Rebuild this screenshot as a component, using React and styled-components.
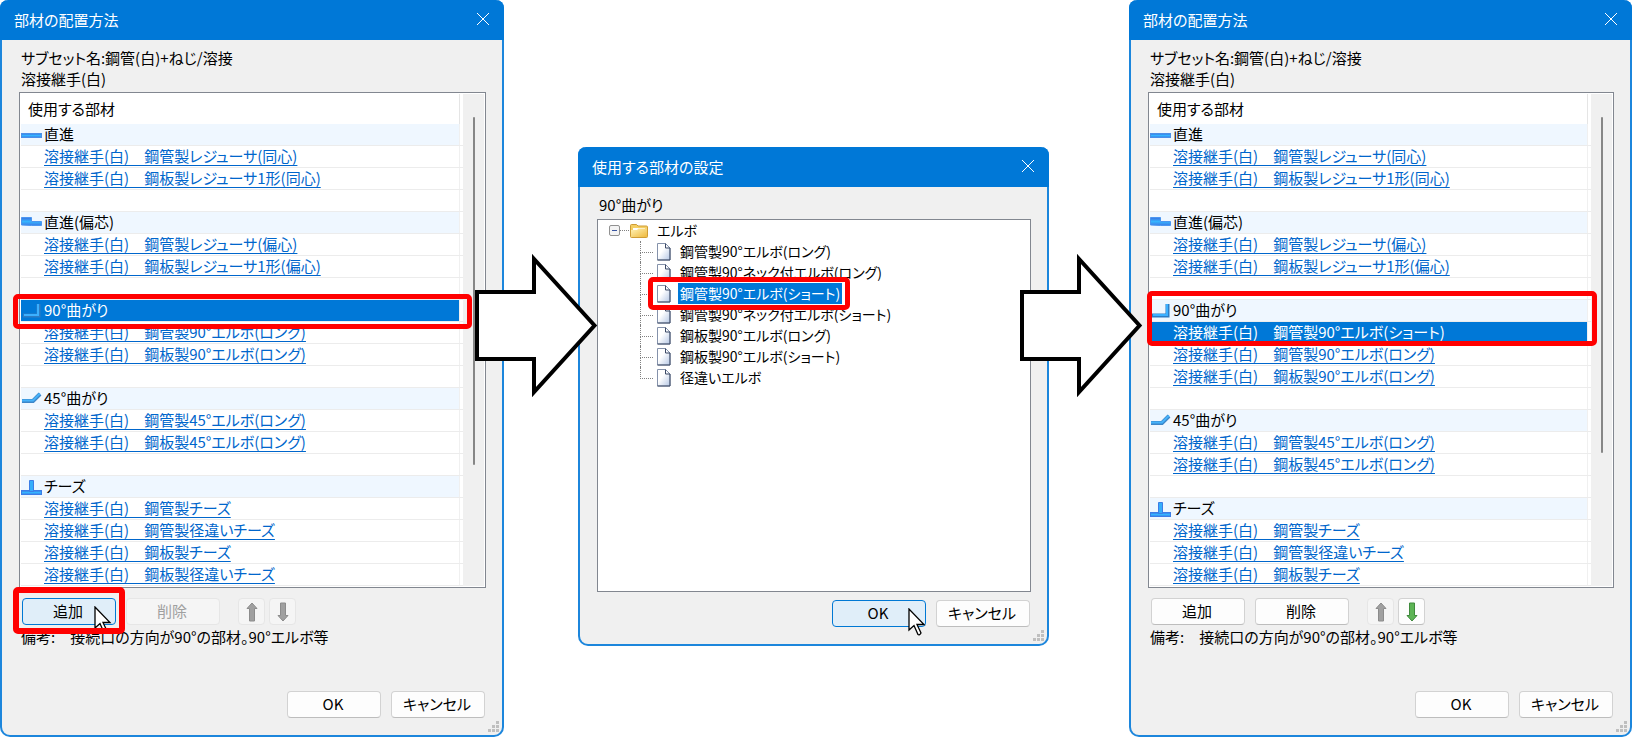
import styled, { createGlobalStyle, css } from 'styled-components'

const GlobalStyle = createGlobalStyle`
  * {
    box-sizing: border-box;
  }

  body {
    margin: 0;
    background: #fff;
    color: #000;
    font-family: "Noto Sans CJK JP", sans-serif;
    font-size: 15px;
    line-height: 21px;
    font-feature-settings: "palt";
  }

  button {
    font: inherit;
    font-feature-settings: inherit;
    color: inherit;
  }
`

const Page = styled.main`
  display: grid;
  grid-template-columns: minmax(0, 504fr) 74px minmax(0, 471fr) 80px minmax(0, 503fr);
  align-items: start;
`

const Dialog = styled.section`
  margin-top: ${(props) => (props.$lowered ? '147px' : '0')};
  border: 2px solid #1c86dc;
  border-top: 0;
  border-radius: 8px 8px 10px 10px;
  background: #f0f0f0;
`

const TitleBar = styled.header`
  display: flex;
  align-items: center;
  justify-content: space-between;
  height: 40px;
  margin: 0 -2px;
  padding: 0 14px 2px;
  border-radius: 8px 8px 0 0;
  background: #0078d7;
  color: #fff;
`

const Title = styled.h2`
  margin: 0;
  font-size: 15px;
  font-weight: 400;
`

const CloseButton = styled.button`
  display: flex;
  padding: 0;
  border: 0;
  background: none;
`

const DialogBody = styled.div`
  padding: 7px 16px 17px 17px;
`

const Caption = styled.p`
  margin: 0;
  padding-left: 2px;
  white-space: nowrap;
`

const ListBox = styled.div`
  display: grid;
  grid-template-columns: minmax(0, 1fr) 21px;
  margin-top: 3px;
  padding: 1px;
  border: 1px solid #828790;
  background: #fff;
`

const ScrollTrack = styled.div`
  padding: 23px 10px 0;
  background: #f0f0f0;
`

const ScrollThumb = styled.div`
  width: 2px;
  height: ${(props) => (props.$short ? '336px' : '348px')};
  border-radius: 1px;
  background: #868686;
`

const PartsTable = styled.table`
  width: 100%;
  border-collapse: separate;
  border-spacing: 0;

  th, td {
    padding: 0;
    font-weight: 400;
    text-align: left;
    white-space: nowrap;
  }

  td {
    border-bottom: 1px solid #ececec;
  }
`

const HeadCell = styled.div`
  height: 30px;
  margin-right: 3px;
  padding: 4px 7px;
  border-right: 1px solid #e5e5e5;
`

const RowCell = styled.div`
  position: relative;
  display: flex;
  align-items: center;
  height: 21px;
  margin-right: 3px;
  padding-bottom: 2px;
  border-right: 1px solid #f0f0f0;
  background: ${(props) => (props.$group ? '#eff7ff' : '#fff')};

  ${(props) => props.$selected && css`
    background: #0078d7;
    color: #fff;
  `}
`

const IconBox = styled.span`
  display: flex;
  flex: none;
  width: 23px;
`

const PartLink = styled.a`
  color: ${(props) => (props.$selected ? '#fff' : '#0066cc')};
  text-decoration: underline;
  text-decoration-thickness: 1px;
  text-underline-offset: 3px;
`

// red frame drawn over the part that the user should look at
const Marker = styled.span`
  position: absolute;
  z-index: 2;
  border: 5px solid #f00;
  border-radius: 5px;
  pointer-events: none;
`

const GroupMarker = styled(Marker)`
  inset: -6px -13px -8px -8px;
`

const TwoRowMarker = styled(Marker)`
  inset: -9px -10px -25px -3px;
`

const ButtonMarker = styled(Marker)`
  inset: -11px -9px -9px -9px;
  border-width: 6px;
`

const TreeMarker = styled(Marker)`
  inset: -6px -8px -6px -30px;
`

const Toolbar = styled.div`
  display: flex;
  gap: 10px;
  margin-top: 10px;
  padding-left: 3px;
`

const MoveButtons = styled.div`
  display: flex;
  gap: 4px;
  margin-left: 8px;
`

const Footer = styled.footer`
  display: flex;
  justify-content: flex-end;
  gap: 10px;
  margin-top: ${(props) => (props.$spaced ? '44px' : '8px')};
  padding-right: 1px;
`

const ButtonSlot = styled.div`
  position: relative;
  display: flex;
`

const Button = styled.button`
  display: flex;
  align-items: center;
  justify-content: center;
  width: ${(props) => (props.$square ? '27px' : '94px')};
  height: 27px;
  padding: ${(props) => (props.$square ? '0' : '0 2px 2px 0')};
  border: 1px solid #d2d2d2;
  border-bottom-color: #bdbdbd;
  border-radius: 4px;
  background: #fdfdfd;

  &:disabled {
    border-color: #e6e6e6;
    background: #f5f5f5;
    color: #a0a0a0;
  }

  ${(props) => props.$hot && css`
    border-color: #0078d4;
    background: #e0eef9;
  `}
`

const Pointer = styled.svg`
  position: absolute;
  left: ${(props) => (props.$tall ? '76px' : '72px')};
  top: 8px;
  z-index: 1;
`

const Note = styled.p`
  margin: 1px 0 0;
  padding-left: 2px;
  white-space: nowrap;
`

const Grip = styled.svg`
  display: block;
  margin: -14px 3px 3px auto;
`

const ArrowCell = styled.div`
  position: relative;
  z-index: 3;
  margin: 252px 0 0 -29px;
`

const ArrowSvg = styled.svg`
  display: block;
  overflow: visible;
`

const TreeBox = styled.ul`
  height: 373px;
  margin: 4px 0 0;
  padding: 0 0 0 11px;
  border: 1px solid #828790;
  background: #fff;
  font-size: 14px;
  list-style: none;
`

const TreeRow = styled.div`
  display: flex;
  align-items: center;
  height: 21px;
  white-space: nowrap;
`

const TreeChildren = styled.ul`
  margin: 0;
  padding: 0 0 0 31px;
  list-style: none;
`

const Expander = styled.button`
  width: 11px;
  height: 11px;
  padding: 4px 2px;
  border: 1px solid #919191;
  border-radius: 2px;
  background: #f4f4f4;

  &::before {
    content: "";
    display: block;
    height: 1px;
    background: #3a55a0;
  }
`

const Dots = styled.span`
  width: 9px;
  margin-right: 1px;
  border-top: 1px dotted #808080;
`

const Branch = styled.span`
  display: flex;
  flex-direction: column;
  width: 13px;
  height: 21px;
  margin-right: 4px;

  &::before {
    content: "";
    height: 11px;
    border-left: 1px dotted #808080;
    border-bottom: 1px dotted #808080;
  }

  &::after {
    content: "";
    flex: 1;
    border-left: ${(props) => (props.$last ? '0' : '1px dotted #808080')};
  }
`

const TreeLabel = styled.span`
  position: relative;
  margin-left: 7px;
  padding: 0 2px;
  background: ${(props) => (props.$selected ? '#0078d7' : 'transparent')};
  color: ${(props) => (props.$selected ? '#fff' : '#000')};
`

const HiddenSvg = styled.svg`
  position: absolute;
`

const Gradients = () => (
  <HiddenSvg width="0" height="0" aria-hidden="true">
    <defs>
      <linearGradient id="pipe" x1="0" y1="0" x2="0" y2="1">
        <stop offset="0" stopColor="#3c6fe0" />
        <stop offset="0.5" stopColor="#35b4ff" />
        <stop offset="1" stopColor="#3c7de6" />
      </linearGradient>
      <linearGradient id="folder" x1="0" y1="0" x2="1" y2="1">
        <stop offset="0" stopColor="#fff3b8" />
        <stop offset="1" stopColor="#efb93c" />
      </linearGradient>
      <linearGradient id="page" x1="0" y1="0" x2="1" y2="1">
        <stop offset="0.4" stopColor="#fff" />
        <stop offset="1" stopColor="#b4c6e4" />
      </linearGradient>
    </defs>
  </HiddenSvg>
)

const pipes = {
  straight: <rect x="0.5" y="9.5" width="20" height="4" fill="url(#pipe)" stroke="#4b8fe8" />,
  eccentric: (
    <path d="M.5 5.500h10v4h10v4h-10l-10-.5z" fill="url(#pipe)" stroke="#4b96f0" />
  ),
  bend90: (
    <>
      <path d="M2 15.500h15.500V4" fill="none" stroke="#2d7cc4" strokeWidth="4" />
      <path d="M3 15h14V4" fill="none" stroke="#3cb0ff" strokeWidth="2" />
    </>
  ),
  bend45: (
    <>
      <path d="M1 13h11l7-7" fill="none" stroke="#3d86c8" strokeWidth="4" />
      <path d="M1 12.500h11l7-7" fill="none" stroke="#45b2fa" strokeWidth="2" />
    </>
  ),
  tee: (
    <>
      <rect x="0.5" y="14.500" width="20" height="4" fill="url(#pipe)" stroke="#3c7de6" />
      <path d="M8.500 4.500h4v11h-4z" fill="#35aefa" stroke="#3c7de6" />
    </>
  ),
}

const PipeIcon = ({ kind }) => (
  <svg width="21" height="21" viewBox="0 -1 21 21" aria-hidden="true">{pipes[kind]}</svg>
)

const FolderIcon = () => (
  <svg width="18" height="15" viewBox="0 0 18 15" aria-hidden="true">
    <path d="M.5 2.500q0-1 1-1h5l1.500 1.500h8.500q1 0 1 1v9.500q0 1-1 1H1.500q-1 0-1-1z" fill="#f5cf62" stroke="#cf9c35" />
    <path d="M3 5h12v3H3z" fill="#fff" />
    <path d="M1 7h6l1.500-1.500H17V14H1z" fill="url(#folder)" />
  </svg>
)

const DocIcon = () => (
  <svg width="14" height="18" viewBox="0 0 14 18" aria-hidden="true">
    <path d="M.5.5h8l4.500 4.500v12H.5z" fill="url(#page)" stroke="#8592ab" />
    <path d="M8.500.5V5H13v12H.5" fill="none" stroke="#3c4a66" />
  </svg>
)

const MoveIcon = ({ down, active }) => (
  <svg width="12" height="20" viewBox="0 0 12 20" aria-hidden="true">
    <path
      d="M6 1l5 5.500H8.500V19h-5V6.500H1z"
      transform={down ? 'rotate(180 6 10)' : undefined}
      fill={active ? '#5db455' : '#a0a0a0'}
      stroke={active ? '#3f8a3c' : '#8c8c8c'}
      strokeLinejoin="round"
    />
  </svg>
)

const CursorIcon = ({ tall }) => (
  <Pointer $tall={tall} width="18" height="29" viewBox="0 0 18 29" aria-hidden="true">
    <path
      d="M1 1v21l5-4.500 4 9q1.500 1 3-1.500l-4-8.500h7z"
      fill="#fff"
      stroke="#000"
      strokeWidth="1.300"
    />
  </Pointer>
)

const ResizeGrip = () => (
  <Grip width="11" height="11" viewBox="0 0 11 11" fill="#bfbfbf" aria-hidden="true">
    <path d="M8 0h3v3H8zM4 4h3v3H4zM8 4h3v3H8zM0 8h3v3H0zM4 8h3v3H4zM8 8h3v3H8z" />
  </Grip>
)

const StepArrow = () => (
  <ArrowCell>
    <ArrowSvg width="123" height="147" viewBox="0 0 123 147" aria-hidden="true">
      <path
        d="M2 40h57V7l60.500 66.500L59 140v-33H2z"
        fill="#fff"
        stroke="#000"
        strokeWidth="4"
        strokeMiterlimit="10"
      />
    </ArrowSvg>
  </ArrowCell>
)

const TitledDialog = ({ title, lowered, children }) => (
  <Dialog $lowered={lowered} aria-label={title}>
    <TitleBar>
      <Title>{title}</Title>
      <CloseButton type="button" aria-label="閉じる">
        <svg width="14" height="14" viewBox="0 0 14 14" fill="none" stroke="#fff" aria-hidden="true">
          <path d="M1 1l12 12M13 1L1 13" />
        </svg>
      </CloseButton>
    </TitleBar>
    <DialogBody>{children}</DialogBody>
    <ResizeGrip />
  </Dialog>
)

const group = (icon, name, extra = {}) => ({ icon, name, ...extra })
const part = (name, extra = {}) => ({ part: `溶接継手(白)\u3000${name}`, ...extra })
const blank = {}

const straightRows = [
  group('straight', '直進'),
  part('鋼管製レジューサ(同心)'),
  part('鋼板製レジューサ1形(同心)'),
  blank,
  group('eccentric', '直進(偏芯)'),
  part('鋼管製レジューサ(偏心)'),
  part('鋼板製レジューサ1形(偏心)'),
  blank,
]

const bendRows = [
  part('鋼管製90°エルボ(ロング)'),
  part('鋼板製90°エルボ(ロング)'),
  blank,
  group('bend45', '45°曲がり'),
  part('鋼管製45°エルボ(ロング)'),
  part('鋼板製45°エルボ(ロング)'),
  blank,
  group('tee', 'チーズ'),
  part('鋼管製チーズ'),
  part('鋼管製径違いチーズ'),
  part('鋼板製チーズ'),
]

const rowsBefore = [
  ...straightRows,
  group('bend90', '90°曲がり', { selected: true, marker: <GroupMarker /> }),
  ...bendRows,
  part('鋼板製径違いチーズ'),
]

const rowsAfter = [
  ...straightRows,
  group('bend90', '90°曲がり', { marker: <TwoRowMarker /> }),
  part('鋼管製90°エルボ(ショート)', { selected: true }),
  ...bendRows,
]

const elbows = [
  '鋼管製90°エルボ(ロング)',
  '鋼管製90°ネック付エルボ(ロング)',
  '鋼管製90°エルボ(ショート)',
  '鋼管製90°ネック付エルボ(ショート)',
  '鋼板製90°エルボ(ロング)',
  '鋼板製90°エルボ(ショート)',
  '径違いエルボ',
]
const selectedElbow = 2

const PlacementDialog = ({ rows, added }) => (
  <TitledDialog title="部材の配置方法">
    <Caption>サブセット名:鋼管(白)+ねじ/溶接</Caption>
    <Caption>溶接継手(白)</Caption>
    <ListBox>
      <PartsTable>
        <thead>
          <tr><th scope="col"><HeadCell>使用する部材</HeadCell></th></tr>
        </thead>
        <tbody>
          {rows.map((row, i) => (
            <tr key={i}>
              <td>
                <RowCell $group={!!row.icon} $selected={row.selected}>
                  <IconBox>{row.icon && <PipeIcon kind={row.icon} />}</IconBox>
                  {row.name}
                  {row.part && <PartLink href="#" $selected={row.selected}>{row.part}</PartLink>}
                  {row.marker}
                </RowCell>
              </td>
            </tr>
          ))}
        </tbody>
      </PartsTable>
      <ScrollTrack>
        <ScrollThumb $short={added} />
      </ScrollTrack>
    </ListBox>
    <Toolbar>
      <ButtonSlot>
        <Button type="button" $hot={!added}>追加</Button>
        {!added && (
          <>
            <CursorIcon />
            <ButtonMarker />
          </>
        )}
      </ButtonSlot>
      <Button type="button" disabled={!added}>削除</Button>
      <MoveButtons>
        <Button type="button" $square disabled aria-label="上へ"><MoveIcon /></Button>
        <Button type="button" $square disabled={!added} aria-label="下へ">
          <MoveIcon down active={added} />
        </Button>
      </MoveButtons>
    </Toolbar>
    <Note>備考:{'\u3000'}接続口の方向が90°の部材。90°エルボ等</Note>
    <Footer $spaced>
      <Button type="button">OK</Button>
      <Button type="button">キャンセル</Button>
    </Footer>
  </TitledDialog>
)

const PartDialog = () => (
  <TitledDialog title="使用する部材の設定" lowered>
    <Caption>90°曲がり</Caption>
    <TreeBox>
      <li>
        <TreeRow>
          <Expander type="button" aria-label="折りたたむ" />
          <Dots />
          <FolderIcon />
          <TreeLabel>エルボ</TreeLabel>
        </TreeRow>
        <TreeChildren>
          {elbows.map((name, i) => (
            <li key={name}>
              <TreeRow>
                <Branch $last={i === elbows.length - 1} />
                <DocIcon />
                <TreeLabel $selected={i === selectedElbow}>
                  {name}
                  {i === selectedElbow && <TreeMarker />}
                </TreeLabel>
              </TreeRow>
            </li>
          ))}
        </TreeChildren>
      </li>
    </TreeBox>
    <Footer>
      <ButtonSlot>
        <Button type="button" $hot>OK</Button>
        <CursorIcon tall />
      </ButtonSlot>
      <Button type="button">キャンセル</Button>
    </Footer>
  </TitledDialog>
)

const App = () => (
  <>
    <GlobalStyle />
    <Gradients />
    <Page>
      <PlacementDialog rows={rowsBefore} />
      <StepArrow />
      <PartDialog />
      <StepArrow />
      <PlacementDialog rows={rowsAfter} added />
    </Page>
  </>
)

export default App
